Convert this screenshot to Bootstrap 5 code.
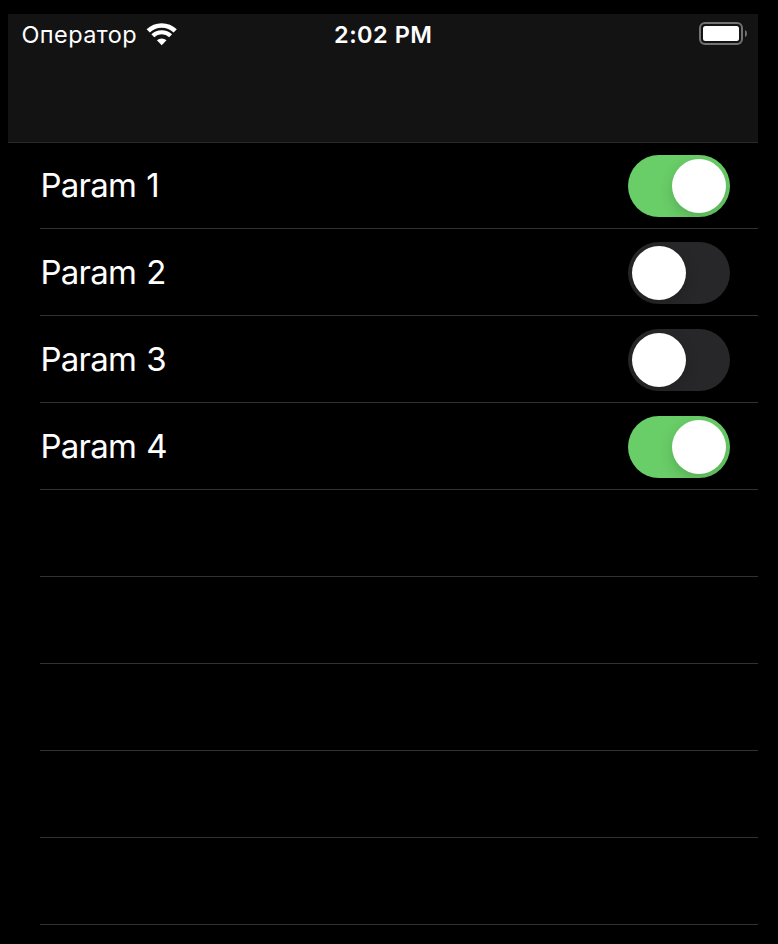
<!DOCTYPE html>
<html lang="ru">
<head>
<meta charset="utf-8">
<meta name="viewport" content="width=device-width, initial-scale=1">
<title>Params</title>
<link href="https://cdn.jsdelivr.net/npm/bootstrap@5.3.0/dist/css/bootstrap.min.css" rel="stylesheet">
<style>
body { background: #000; color: #fff; font-family: Inter, "Liberation Sans", sans-serif; height: 944px; overflow: hidden; }
.phone { width: 750px; margin: 14px 0 0 8px; }
.topbar { height: 128px; background: #131313; box-shadow: 0 1px 0 #2a2a2b; }
.status { height: 42px; font-size: 23.5px; line-height: 42px; padding: 0 10px 0 13.5px; }
.carrier { letter-spacing: .4px; white-space: nowrap; }
.clock { letter-spacing: .5px; font-weight: 560; white-space: nowrap; margin-right: 3px; }
.wifi { margin: 9px 0 0 8.5px; }
.params { margin-left: 32px; }
.param { height: 87px; padding: 0 28px 0 0; border-bottom: 1px solid #323234; font-size: 33px; letter-spacing: -.75px; word-spacing: 1.5px; }
.label { padding-top: 2px; margin-left: .5px; font-weight: 380; }
.toggle { width: 102px; height: 62px; padding: 4px; background: #272729; margin-top: 2px; overflow: hidden; }
.toggle.on { background: #69ce67; }
.knob { width: 54px; height: 54px; background: #fff; box-shadow: 0 5px 14px rgba(0,0,0,.17); }
</style>
<script src="https://cdn.jsdelivr.net/npm/bootstrap@5.3.0/dist/js/bootstrap.bundle.min.js"></script>
</head>
<body>
<main class="phone">
  <header class="topbar position-relative z-1">
    <div class="status row g-0 align-items-start">
      <div class="col d-flex align-items-start">
        <span class="carrier">Оператор</span>
        <svg class="wifi" width="32" height="24" viewBox="0 0 32 24" fill="none" stroke="#fff" aria-label="Wi-Fi">
          <path d="M2.2 7.9A19.4 19.4 0 0 1 29.2 7.9" stroke-width="4.6"/>
          <path d="M6.8 12.8A12.8 12.8 0 0 1 24.6 12.8" stroke-width="4.1"/>
          <path d="M10.9 17.3A7 7 0 0 1 20.5 17.3L15.7 22.2Z" fill="#fff" stroke="none"/>
        </svg>
      </div>
      <div class="col-auto"><span class="clock">2:02 PM</span></div>
      <div class="col d-flex justify-content-end">
        <svg class="mt-2" width="49" height="23" viewBox="0 0 49 23" aria-label="Battery">
          <rect x="1" y="1" width="42" height="21" rx="5" fill="none" stroke="#737373" stroke-width="2"/>
          <rect x="4" y="4" width="36" height="15" rx="2.5" fill="#fff"/>
          <path d="M46 8Q48 8.5 48 11.5T46 15Z" fill="#737373"/>
        </svg>
      </div>
    </div>
  </header>
  <section class="params">
    <div class="param d-flex align-items-center justify-content-between"><span class="label">Param 1</span><div class="toggle on rounded-pill d-flex justify-content-end" role="switch" aria-checked="true"><span class="knob rounded-circle"></span></div></div>
    <div class="param d-flex align-items-center justify-content-between"><span class="label">Param 2</span><div class="toggle rounded-pill d-flex" role="switch" aria-checked="false"><span class="knob rounded-circle"></span></div></div>
    <div class="param d-flex align-items-center justify-content-between"><span class="label">Param 3</span><div class="toggle rounded-pill d-flex" role="switch" aria-checked="false"><span class="knob rounded-circle"></span></div></div>
    <div class="param d-flex align-items-center justify-content-between"><span class="label">Param 4</span><div class="toggle on rounded-pill d-flex justify-content-end" role="switch" aria-checked="true"><span class="knob rounded-circle"></span></div></div>
    <div class="param"></div>
    <div class="param"></div>
    <div class="param"></div>
    <div class="param"></div>
    <div class="param"></div>
  </section>
</main>
</body>
</html>
